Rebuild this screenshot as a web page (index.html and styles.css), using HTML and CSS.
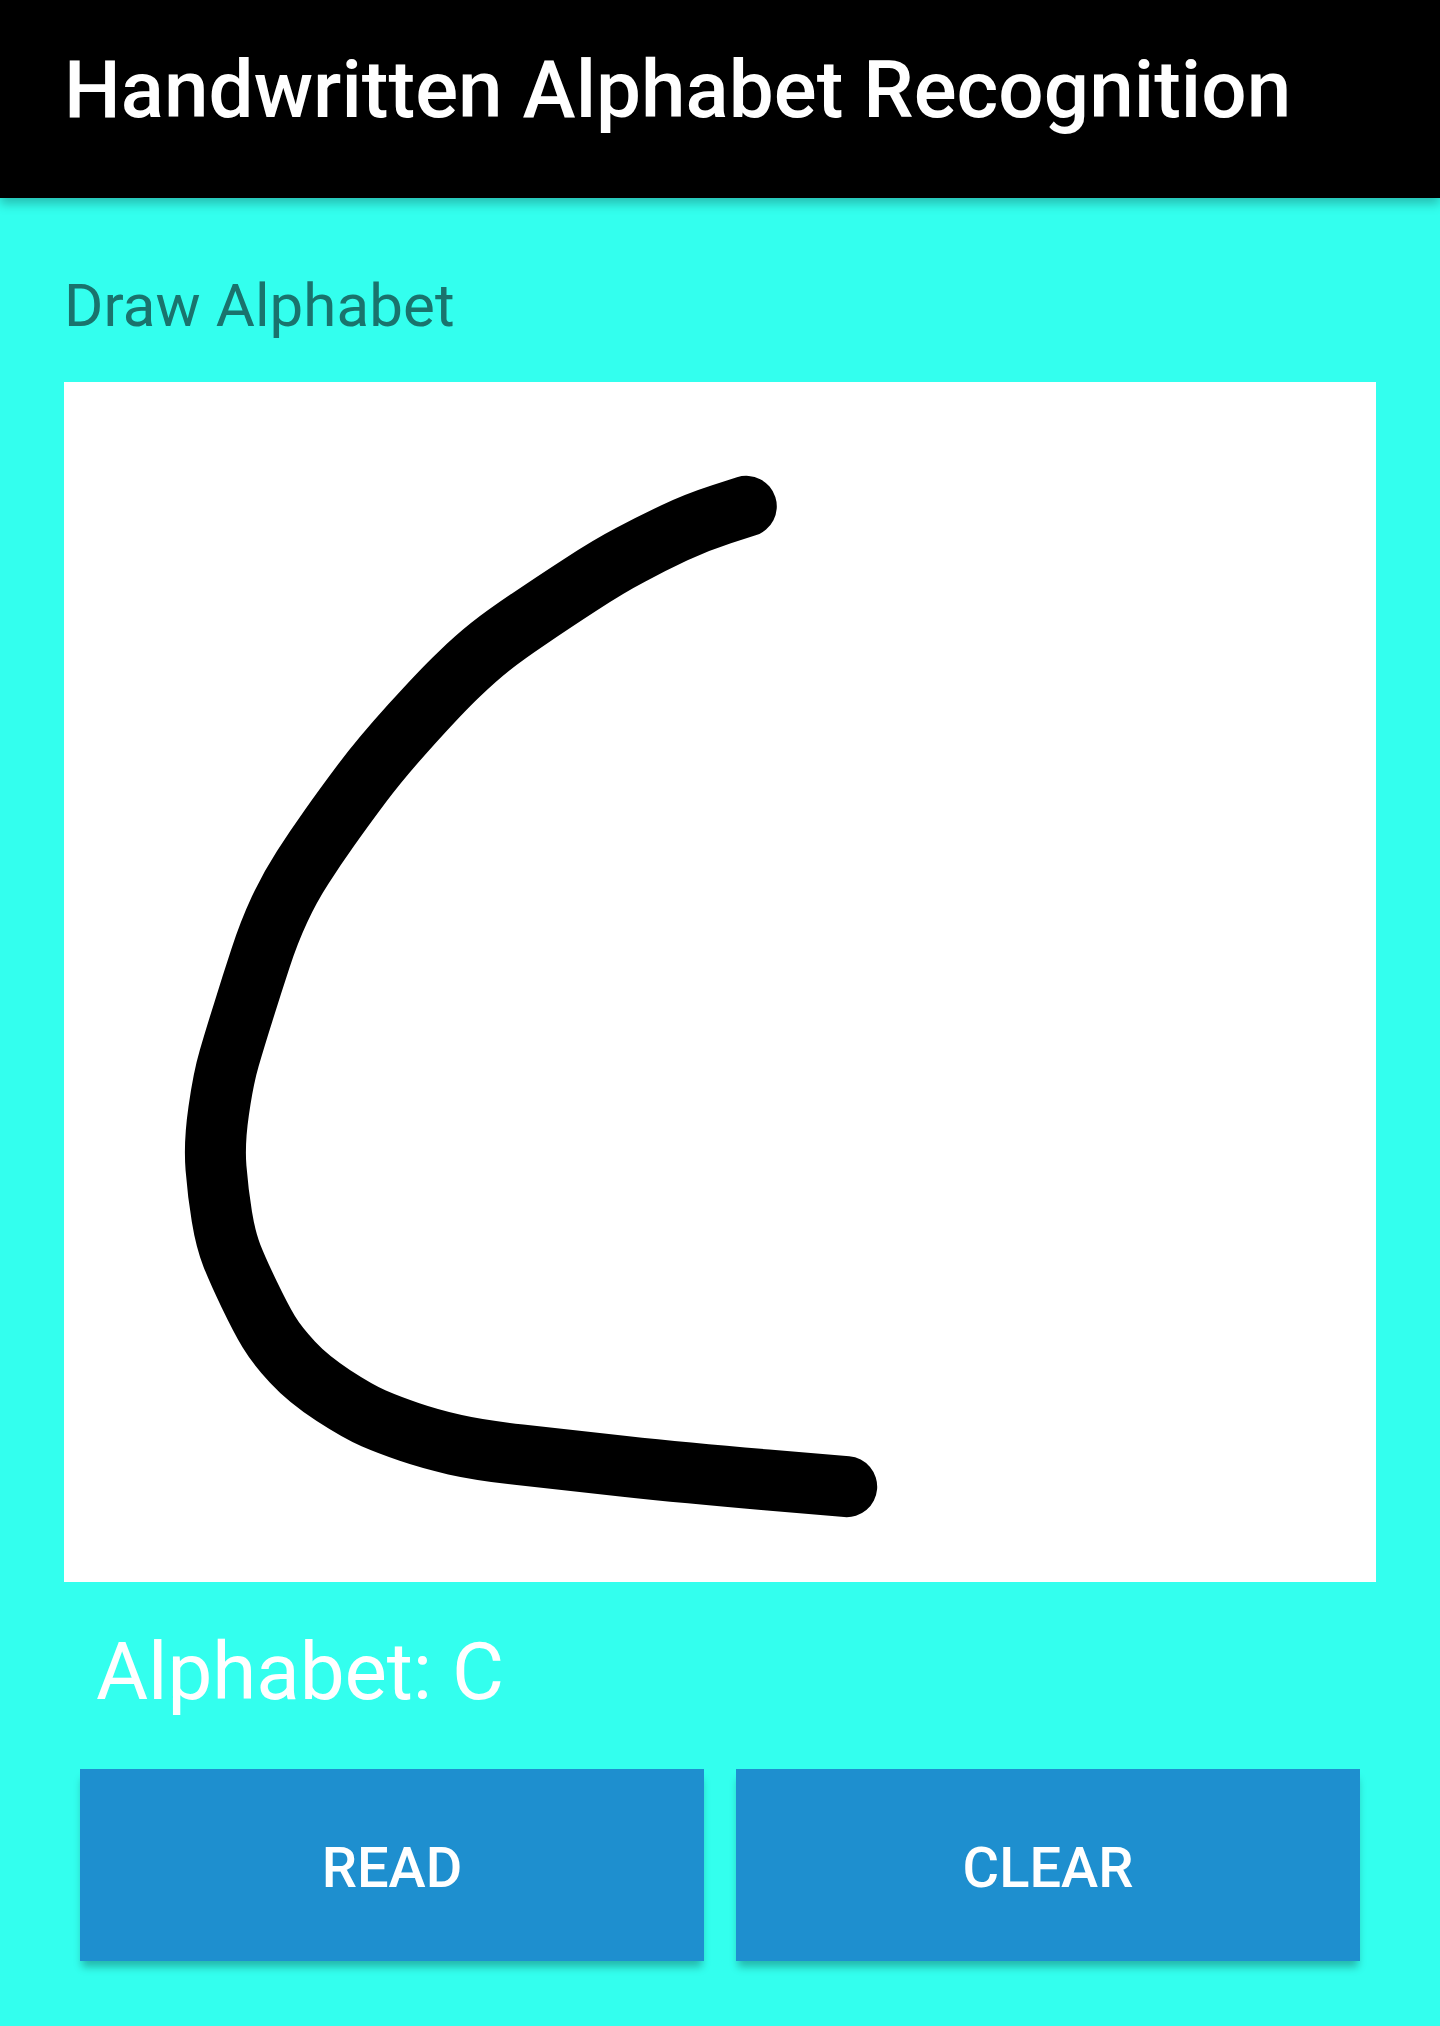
FILE: index.html
```html
<!DOCTYPE html>
<html lang="en">
<head>
   <meta charset="UTF-8">
   <meta name="viewport" content="width=device-width, initial-scale=1.0">
   <title>Handwritten Alphabet Recognition</title>
   <link rel="stylesheet" href="styles.css">
</head>
<body>

<div class="toolbar">
   <h1>Handwritten Alphabet Recognition</h1>
</div>

<div class="content">
   <p class="draw-label">Draw Alphabet</p>

   <svg class="canvas" viewBox="0 0 1312 1200" xmlns="http://www.w3.org/2000/svg">
       <path class="stroke" d="M682.3 124.3 L657.5 132.3 Q632.7 140.3 610.5 150.8 Q588.3 161.3 566.7 172.7 Q545 184 517.2 202.2 Q489.3 220.3 465.2 236.7 Q441 253 426.5 264.5 Q412 276 394.9 292.4 Q377.7 308.7 347.2 342.5 Q316.7 376.3 298 401.3 Q279.3 426.3 265.2 446.3 Q251 466.3 238.5 485.7 Q226 505 215.5 527.5 Q205 550 196.4 576.5 Q187.7 603 179.4 629.7 Q171 656.3 165.2 676.3 Q159.3 696.3 154.7 728.7 Q150 761 152 786 Q154 811.3 157.9 834.7 Q161.7 858 168 873.9 Q174.3 889.7 185.5 913 Q196.7 936.3 204.7 949.7 Q212.7 963 228.5 980.2 Q244.3 997.3 269.3 1013.5 Q294.3 1029.7 309.7 1036.4 Q325 1043 345.5 1050 Q366 1057 391 1062.7 Q416 1068.3 456 1072.8 Q496 1077.3 559.4 1084.2 Q622.7 1091 702.7 1097.9 L782.7 1104.7"/>
   </svg>

   <p class="result">Alphabet: C</p>

   <div class="button-row">
       <button type="button" class="action-btn">READ</button>
       <button type="button" class="action-btn">CLEAR</button>
   </div>
</div>

</body>
</html>
```

FILE: styles.css
```css
body {
    font-family: Roboto, "Liberation Sans", sans-serif;
    background-color: #33ffee;
    min-height: 100vh;
    margin: 0;
}
.toolbar {
    background-color: #000;
    height: 198px;
    padding: 43px 64px 0;
    box-sizing: border-box;
    box-shadow: 0px 6px 10px rgba(0, 0, 0, 0.25);
}
h1 {
    margin: 0;
    color: white;
    font-size: 80px;
    font-weight: 500;
    line-height: 94px;
    letter-spacing: 0.04px;
}
.content {
    padding: 73px 64px 0;
}
.draw-label {
    margin: 0 0 41px;
    color: #1a736d;
    font-size: 60px;
    line-height: 70px;
    letter-spacing: 0.1px;
}
.canvas {
    display: block;
    width: 1312px;
    height: 1200px;
    background-color: white;
}
.stroke {
    fill: none;
    stroke: black;
    stroke-width: 61;
    stroke-linecap: round;
    stroke-linejoin: round;
}
.result {
    margin: 43px 0 50px;
    padding-left: 32px;
    color: white;
    font-size: 80px;
    line-height: 94px;
    letter-spacing: -0.1px;
}
.button-row {
    display: flex;
    gap: 32px;
    padding: 0 16px;
}
.action-btn {
    flex: 1;
    height: 192px;
    padding: 6px 0 0;
    background-color: #1e8fcf;
    color: white;
    border: none;
    font-family: inherit;
    font-size: 56px;
    font-weight: 500;
    box-shadow: 0px 8px 8px -2px rgba(0, 0, 0, 0.28);
    cursor: pointer;
}
```
